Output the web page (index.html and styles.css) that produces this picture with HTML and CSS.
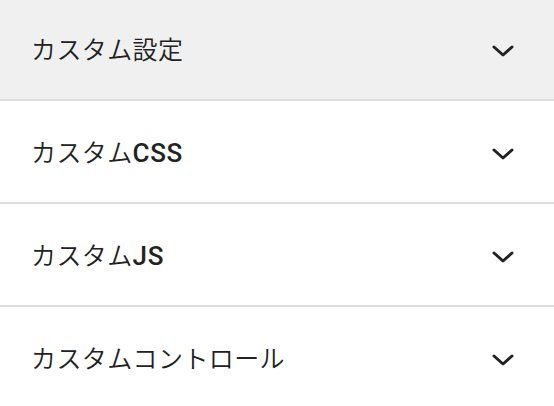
FILE: index.html
```html
<!DOCTYPE html>
<html lang="ja">
<head>
  <meta charset="UTF-8">
  <meta name="viewport" content="width=device-width, initial-scale=1.0">
  <title>カスタム設定</title>
  <link rel="stylesheet" href="styles.css">
</head>
<body>
  <div class="accordion">
    <div class="item active">
      <span class="title">カスタム設定</span>
      <svg class="chevron" viewBox="0 0 22 12"><path d="M2 2 L11 10 L20 2"/></svg>
    </div>
    <div class="item">
      <span class="title">カスタム<span class="latin">CSS</span></span>
      <svg class="chevron" viewBox="0 0 22 12"><path d="M2 2 L11 10 L20 2"/></svg>
    </div>
    <div class="item">
      <span class="title">カスタム<span class="latin">JS</span></span>
      <svg class="chevron" viewBox="0 0 22 12"><path d="M2 2 L11 10 L20 2"/></svg>
    </div>
    <div class="item">
      <span class="title">カスタムコントロール</span>
      <svg class="chevron" viewBox="0 0 22 12"><path d="M2 2 L11 10 L20 2"/></svg>
    </div>
  </div>
</body>
</html>
```

FILE: styles.css
```css
* {
  margin: 0;
  padding: 0;
  box-sizing: border-box;
}

body {
  background: #fff;
  font-family: "Noto Sans CJK JP", sans-serif;
  color: #222;
  overflow: hidden;
}

.accordion {
  margin-top: -2px;
}

.item {
  display: flex;
  align-items: center;
  justify-content: space-between;
  height: 103px;
  padding: 0 40px 0 31px;
  border-bottom: 2px solid #dedede;
  background: #fff;
}

.item.active {
  background: #f0f0f0;
}

.title {
  font-size: 25px;
  font-weight: 350;
  letter-spacing: 0.4px;
  margin-top: -2px;
}

.latin {
  font-family: Roboto, "Liberation Sans", sans-serif;
  font-weight: 500;
  font-size: 26px;
  letter-spacing: 0.6px;
}

.chevron {
  width: 22px;
  height: 12px;
  margin-top: 5px;
  fill: none;
  stroke: #222;
  stroke-width: 3;
  stroke-linecap: round;
  stroke-linejoin: round;
}
```
